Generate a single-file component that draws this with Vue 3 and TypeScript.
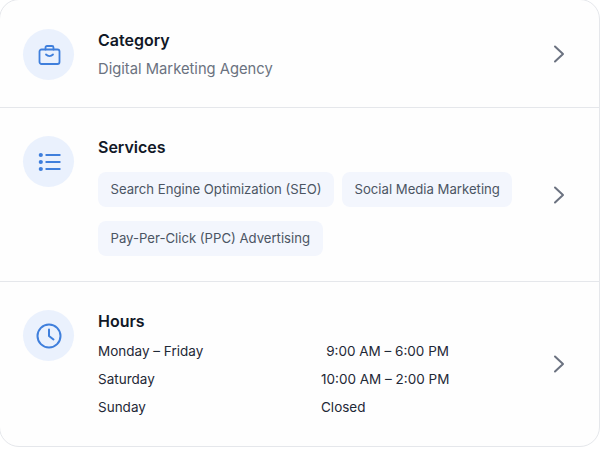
<script setup lang="ts">
interface Hour {
  day: string
  time: string
  closed?: boolean
}

const services: string[] = [
  'Search Engine Optimization (SEO)',
  'Social Media Marketing',
  'Pay-Per-Click (PPC) Advertising',
]

const hours: Hour[] = [
  { day: 'Monday – Friday', time: '9:00 AM – 6:00 PM' },
  { day: 'Saturday', time: '10:00 AM – 2:00 PM' },
  { day: 'Sunday', time: 'Closed', closed: true },
]
</script>

<template>
  <div class="page">
    <div class="card">
      <section class="row row-category">
        <div class="icon">
          <svg width="24" height="24" viewBox="0 0 24 24" fill="none" stroke="#3f7fdc" stroke-width="1.8" stroke-linecap="round" stroke-linejoin="round">
            <rect x="2.5" y="6.5" width="20" height="14.5" rx="2" />
            <path d="M8.5 6.5V4.5a1.5 1.5 0 0 1 1.5-1.5h5a1.5 1.5 0 0 1 1.5 1.5v2" />
            <path d="M9 11.5c2 2 5 2 7 0" />
          </svg>
        </div>
        <div class="body">
          <h3>Category</h3>
          <p class="sub">Digital Marketing Agency</p>
        </div>
        <svg class="chevron" width="14" height="20" viewBox="0 0 14 20" fill="none" stroke="#6b7280" stroke-width="2" stroke-linecap="round" stroke-linejoin="round">
          <path d="M3 2.5l8 7.5-8 7.5" />
        </svg>
      </section>

      <section class="row row-services">
        <div class="icon">
          <svg width="24" height="24" viewBox="0 0 24 24" fill="none" stroke="#3f7fdc" stroke-width="1.8" stroke-linecap="round">
            <path d="M9.2 5h13.6M9.2 12h13.6M9.2 19h13.6" />
            <circle cx="3.8" cy="5" r="1.2" fill="#3f7fdc" />
            <circle cx="3.8" cy="12" r="1.2" fill="#3f7fdc" />
            <circle cx="3.8" cy="19" r="1.2" fill="#3f7fdc" />
          </svg>
        </div>
        <div class="body">
          <h3>Services</h3>
          <div class="tags">
            <span v-for="s in services" :key="s" class="tag">{{ s }}</span>
          </div>
        </div>
        <svg class="chevron" width="14" height="20" viewBox="0 0 14 20" fill="none" stroke="#6b7280" stroke-width="2" stroke-linecap="round" stroke-linejoin="round">
          <path d="M3 2.5l8 7.5-8 7.5" />
        </svg>
      </section>

      <section class="row row-hours">
        <div class="icon">
          <svg width="26" height="26" viewBox="0 0 26 26" fill="none" stroke="#3f7fdc" stroke-width="2" stroke-linecap="round" stroke-linejoin="round">
            <circle cx="13" cy="13" r="11.5" />
            <path d="M13 6.5V13l4.5 3.5" />
          </svg>
        </div>
        <div class="body">
          <h3>Hours</h3>
          <div class="hours">
            <div v-for="h in hours" :key="h.day" class="hour">
              <span class="day">{{ h.day }}</span>
              <span class="time" :class="{ closed: h.closed }">{{ h.time }}</span>
            </div>
          </div>
        </div>
        <svg class="chevron" width="14" height="20" viewBox="0 0 14 20" fill="none" stroke="#6b7280" stroke-width="2" stroke-linecap="round" stroke-linejoin="round">
          <path d="M3 2.5l8 7.5-8 7.5" />
        </svg>
      </section>
    </div>
  </div>
</template>

<style scoped>
.page {
  width: 600px;
  height: 452px;
  overflow: hidden;
  background: #fff;
  font-family: Inter, "Liberation Sans", sans-serif;
}

.card {
  width: 601px;
  height: 448px;
  margin: -1px 0 0 -1px;
  box-sizing: border-box;
  border: 1px solid #e5e7eb;
  border-radius: 20px;
  background: #fefefe;
  display: flex;
  flex-direction: column;
}

.row {
  display: flex;
  align-items: center;
  box-sizing: border-box;
  padding-left: 23px;
  border-bottom: 1px solid #e5e7eb;
}

.row-category {
  height: 108px;
}

.row-services {
  height: 174px;
}

.row-hours {
  flex: 1;
  border-bottom: none;
}

.icon {
  width: 51px;
  height: 51px;
  flex-shrink: 0;
  align-self: flex-start;
  margin-top: 29px;
  border-radius: 50%;
  background: #eaf1fd;
  display: flex;
  align-items: center;
  justify-content: center;
}

.row-services .icon,
.row-hours .icon {
  margin-top: 28px;
}

.body {
  margin-left: 24px;
  flex: 1;
  align-self: flex-start;
  padding-top: 29px;
}

.row-services .body,
.row-hours .body {
  padding-top: 28px;
}

h3 {
  margin: 0;
  font-size: 16px;
  line-height: 22px;
  font-weight: 600;
  color: #111827;
}

.sub {
  margin: 7px 0 0;
  font-size: 14.75px;
  line-height: 22px;
  color: #6b7280;
}

.tags {
  display: flex;
  flex-wrap: wrap;
  gap: 14px 8px;
  width: 430px;
  margin-top: 14px;
}

.tag {
  height: 35px;
  box-sizing: border-box;
  padding: 0 12.5px 1px;
  display: flex;
  align-items: center;
  border-radius: 8px;
  background: #f3f6fd;
  font-size: 13.15px;
  color: #4b5563;
  white-space: nowrap;
}

.hours {
  margin-top: 5px;
}

.hour {
  display: flex;
  height: 28px;
  align-items: center;
  font-size: 13.5px;
  color: #1f2937;
  white-space: nowrap;
}

.day {
  width: 223px;
}

.time {
  width: 128px;
  text-align: right;
}

.time.closed {
  text-align: left;
}

.chevron {
  margin-right: 33px;
  flex-shrink: 0;
}
</style>
